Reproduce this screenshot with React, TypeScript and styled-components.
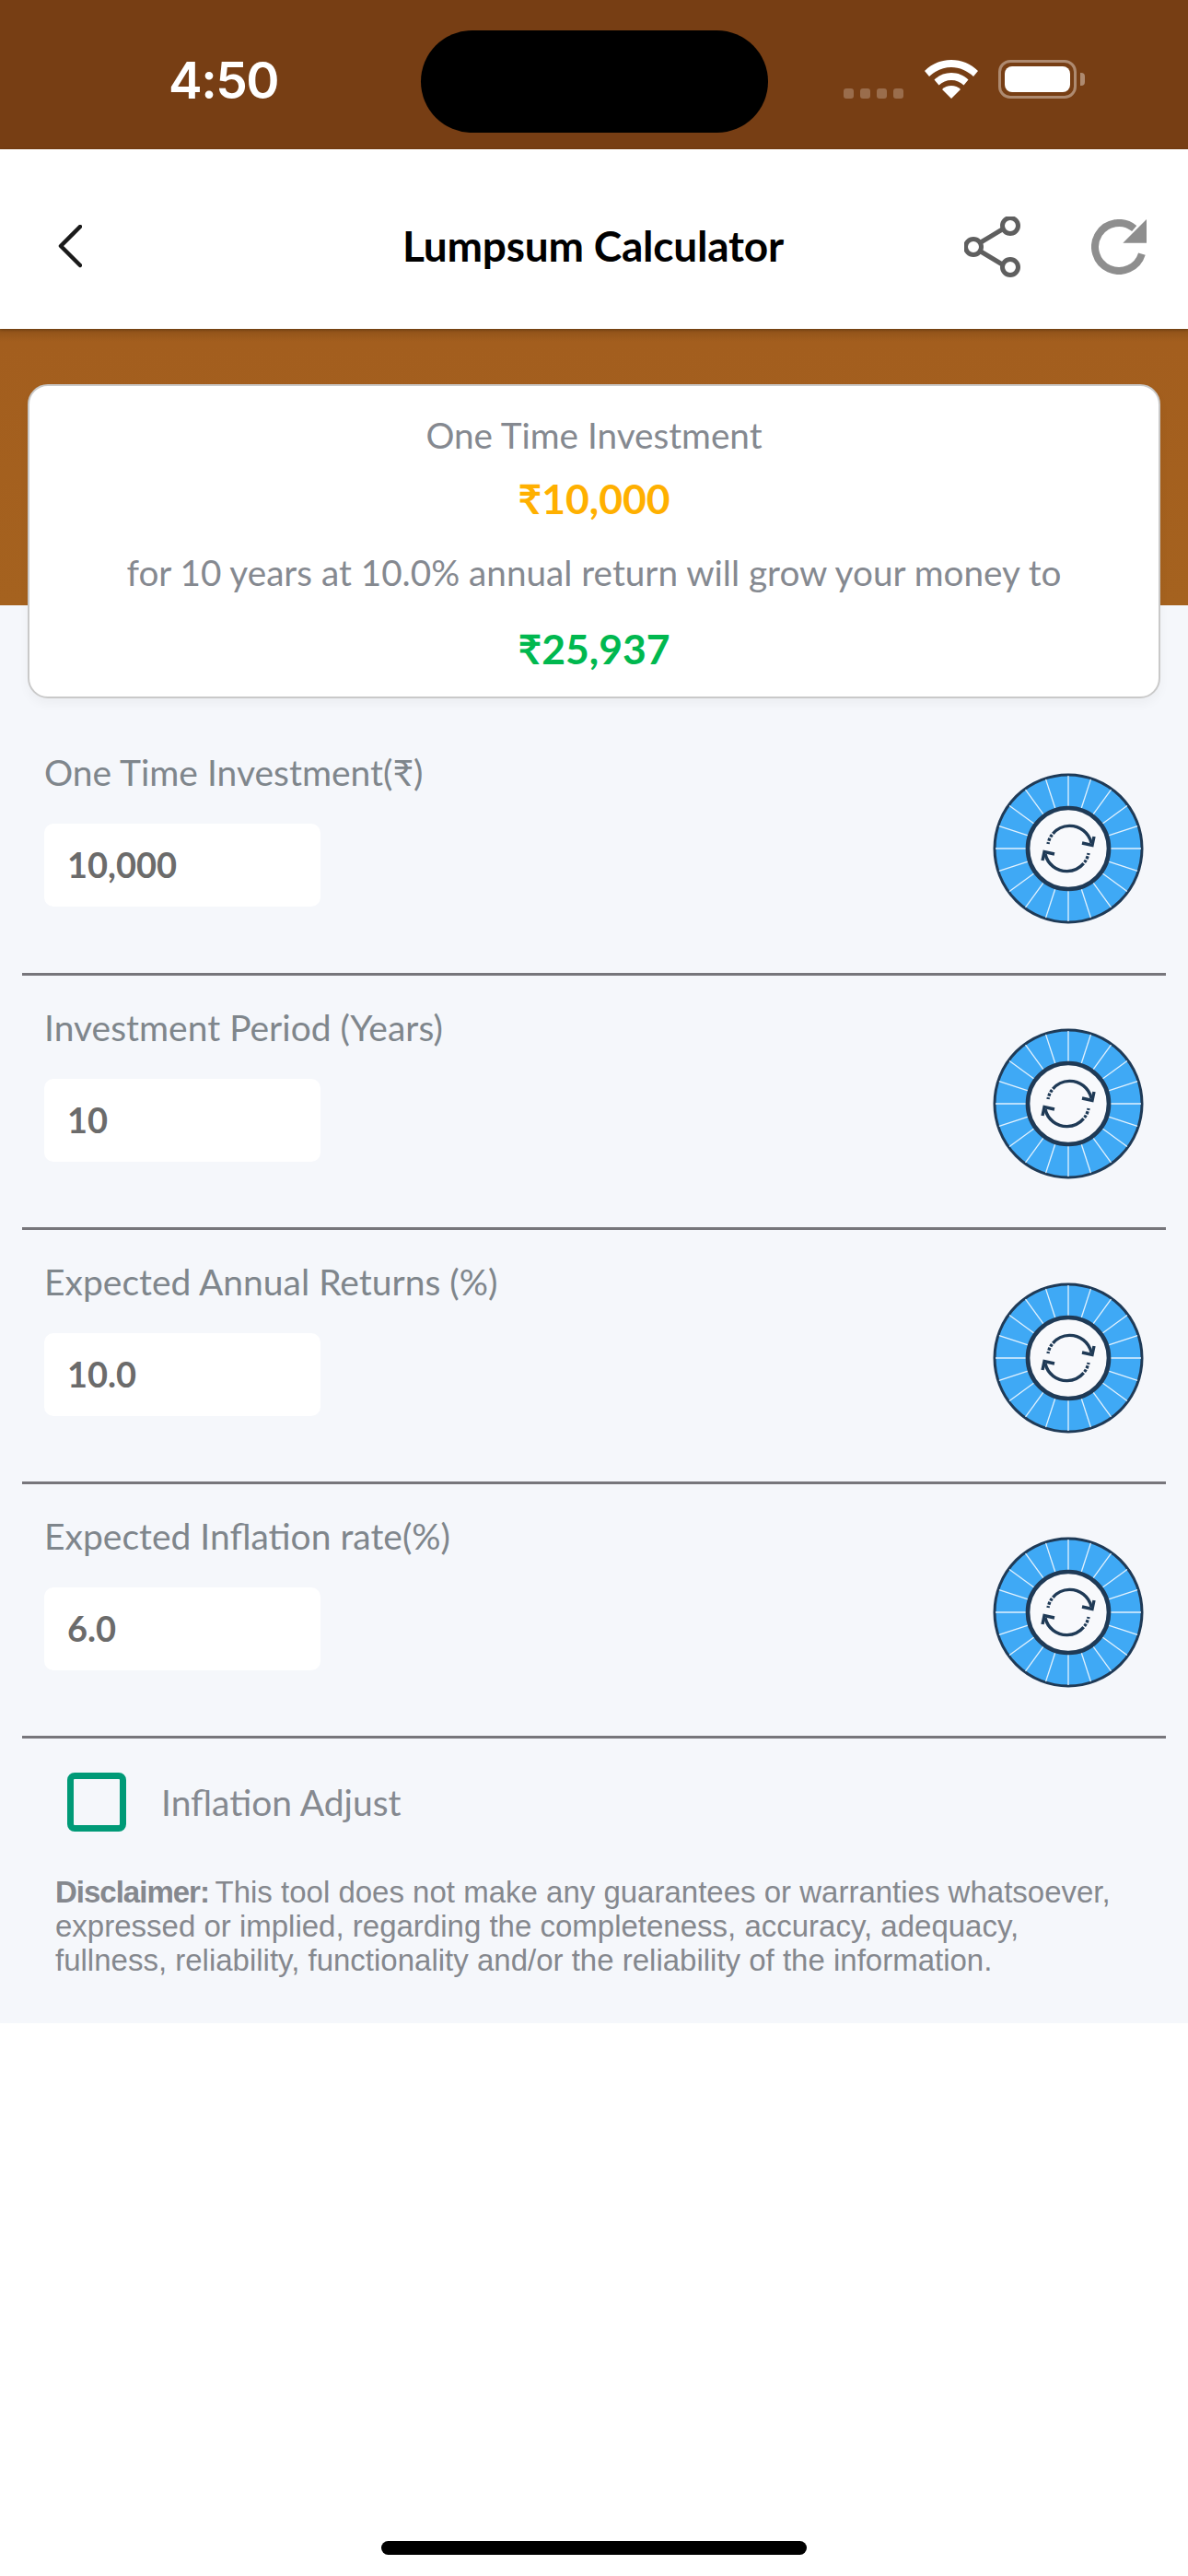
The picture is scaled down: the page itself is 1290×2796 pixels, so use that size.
import React from 'react';
import styled, { createGlobalStyle } from 'styled-components';

const GlobalStyle = createGlobalStyle`
  html, body { margin: 0; padding: 0; background: #fff; }
  body { font-family: Lato, "Noto Sans", sans-serif; }
`;

const fields = [
  { label: 'One Time Investment(₹)', value: '10,000' },
  { label: 'Investment Period (Years)', value: '10' },
  { label: 'Expected Annual Returns (%)', value: '10.0' },
  { label: 'Expected Inflation rate(%)', value: '6.0' },
];

const spokes = Array.from({ length: 20 }, (_, i) => i * 18);

const Wheel = () => (
  <WheelSvg viewBox="0 0 164 164">
    <circle cx="82" cy="82" r="80" fill="#3fa9f5" stroke="#1f3a56" strokeWidth="3" />
    {spokes.map((deg) => (
      <line key={deg} x1="82" y1="3" x2="82" y2="36" stroke="#e3f2fe" strokeWidth="1.3" transform={`rotate(${deg} 82 82)`} />
    ))}
    <circle cx="82" cy="82" r="44" fill="#f8f9fc" stroke="#1f3a56" strokeWidth="4.7" />
    {[0, 180].map((deg) => (
      <g key={deg} fill="none" stroke="#1f3a56" strokeWidth="3.4" transform={`rotate(${deg} 82 82)`}>
        <path d="M60 77 A24 24 0 0 1 107 76" strokeDasharray="2 1.5 3 1.5 3 1.5 60" />
        <path d="M97 76 L108 78.500 L110 69" />
      </g>
    ))}
  </WheelSvg>
);

export default function App() {
  return (
    <Page>
      <GlobalStyle />
      <StatusBar>
        <Clock>4:50</Clock>
        <Island />
        <StatusIcons>
          <Signal>
            <i /><i /><i /><i />
          </Signal>
          <svg width="58" height="42" viewBox="0 0 58 42">
            <path fill="#fff" d="M29 0C18 0 8 4 0 12l5 6c6.500-6 15-10 24-10s17.500 4 24 10l5-6C50 4 40 0 29 0z" />
            <path fill="#fff" d="M29 14c-7 0-13.500 2.700-18.500 7.500l5 6C19 24 24 22 29 22s10 2 13.500 5.500l5-6C42.500 16.700 36 14 29 14z" />
            <path fill="#fff" d="M29 28c-4 0-7.500 1.500-10 4l10 10 10-10c-2.500-2.500-6-4-10-4z" />
          </svg>
          <Battery>
            <BatteryFill />
            <BatteryCap />
          </Battery>
        </StatusIcons>
      </StatusBar>

      <NavBar>
        <BackButton>
          <svg width="26" height="48" viewBox="0 0 26 48">
            <path d="M24 2 L3 23 L24 44" fill="none" stroke="#1a1a1a" strokeWidth="4.500" strokeLinecap="round" strokeLinejoin="round" />
          </svg>
        </BackButton>
        <Title>Lumpsum Calculator</Title>
        <NavActions>
          <svg width="62" height="66" viewBox="0 0 62 66">
            <g fill="none" stroke="#5f5f5f" strokeWidth="5">
              <path d="M18 28 L43 13 M18 38 L43 53" />
              <circle cx="10" cy="33" r="8.500" />
              <circle cx="50" cy="10" r="8.500" />
              <circle cx="50" cy="55" r="8.500" />
            </g>
          </svg>
          <svg width="60" height="60" viewBox="0 0 60 60">
            <path d="M46.700 10 A26 26 0 1 0 54.900 37.600" fill="none" stroke="#8e8e8e" strokeWidth="8" />
            <path d="M34.300 25.700 L60 25.700 L60 0 z" fill="#8e8e8e" />
          </svg>
        </NavActions>
      </NavBar>

      <Hero />
      <Summary>
        <SummaryLabel $top={30}>One Time Investment</SummaryLabel>
        <Amount $color="#ffb000" $top={20}>₹10,000</Amount>
        <SummaryLabel $top={31}>for 10 years at 10.0% annual return will grow your money to</SummaryLabel>
        <Amount $color="#00b84f" $top={34}>₹25,937</Amount>
      </Summary>

      <Form>
        {fields.map((f) => (
          <FieldRow key={f.label}>
            <FieldLeft>
              <FieldLabel>{f.label}</FieldLabel>
              <ValueBox>{f.value}</ValueBox>
            </FieldLeft>
            <Wheel />
          </FieldRow>
        ))}
        <CheckRow>
          <CheckBox />
          <CheckLabel>Inflation Adjust</CheckLabel>
        </CheckRow>
        <Disclaimer>
          <b>Disclaimer:</b> This tool does not make any guarantees or warranties whatsoever,
          expressed or implied, regarding the completeness, accuracy, adequacy,
          fullness, reliability, functionality and/or the reliability of the information.
        </Disclaimer>
      </Form>

      <BottomArea>
        <HomeBar />
      </BottomArea>
    </Page>
  );
}

const Page = styled.div`
  width: 1290px;
  height: 2796px;
  display: flex;
  flex-direction: column;
  background: #fff;
  overflow: hidden;
`;

const StatusBar = styled.div`
  height: 162px;
  flex-shrink: 0;
  background: #773e14;
  display: flex;
  align-items: flex-start;
`;

const Clock = styled.div`
  margin: 60px 0 0 183px;
  width: 274px;
  font-family: Inter, "Liberation Sans", sans-serif;
  font-size: 55px;
  line-height: 55px;
  font-weight: 600;
  letter-spacing: -1.5px;
  color: #fff;
`;

const Island = styled.div`
  width: 377px;
  height: 111px;
  margin-top: 33px;
  border-radius: 56px;
  background: #000;
`;

const StatusIcons = styled.div`
  margin: 65px 0 0 82px;
  display: flex;
  align-items: flex-start;
  gap: 23px;
`;

const Signal = styled.div`
  display: flex;
  gap: 7px;
  margin-top: 31px;

  i {
    display: block;
    width: 11px;
    height: 11px;
    border-radius: 3px;
    background: #9a6d4c;
  }
`;

const Battery = styled.div`
  position: relative;
  width: 85px;
  height: 42px;
  box-sizing: border-box;
  border: 3px solid #ae8a70;
  border-radius: 13px;
  padding: 4px;
  margin-left: -1px;
`;

const BatteryFill = styled.div`
  width: 100%;
  height: 100%;
  background: #fff;
  border-radius: 8px;
`;

const BatteryCap = styled.div`
  position: absolute;
  right: -12px;
  top: 11px;
  width: 5px;
  height: 14px;
  background: #ae8a70;
  border-radius: 0 4px 4px 0;
`;

const NavBar = styled.div`
  box-sizing: border-box;
  height: 195px;
  padding-top: 16px;
  flex-shrink: 0;
  background: #fff;
  display: grid;
  grid-template-columns: 1fr auto 1fr;
  align-items: center;
  position: relative;
  z-index: 1;
  box-shadow: 0 1px 3px rgba(0, 0, 0, 0.3);
`;

const BackButton = styled.div`
  padding-left: 63px;
  line-height: 0;
`;

const Title = styled.div`
  margin: -3px 0 0 -2px;
  font-size: 46px;
  font-weight: 700;
  letter-spacing: -0.2px;
  color: #000;
`;

const NavActions = styled.div`
  display: flex;
  align-items: center;
  justify-content: flex-end;
  gap: 76px;
  padding-right: 45px;
`;

const Hero = styled.div`
  height: 300px;
  flex-shrink: 0;
  background: linear-gradient(#8f5219 0, #a35e1e 14px, #a5621f 100%);
`;

const Summary = styled.div`
  box-sizing: border-box;
  width: 1230px;
  height: 341px;
  margin: -240px 0 0 30px;
  flex-shrink: 0;
  position: relative;
  background: #fff;
  border: 2px solid #c9c9c9;
  border-radius: 22px;
  box-shadow: 0 6px 12px rgba(0, 0, 0, 0.04);
  display: flex;
  flex-direction: column;
  align-items: center;
`;

const SummaryLabel = styled.div<{ $top: number }>`
  margin-top: ${(p) => p.$top}px;
  font-size: 38.700px;
  line-height: 46px;
  color: #858990;
`;

const Amount = styled.div<{ $color: string; $top: number }>`
  margin-top: ${(p) => p.$top}px;
  font-size: 44.500px;
  line-height: 52px;
  font-weight: 700;
  color: ${(p) => p.$color};
`;

const Form = styled.div`
  margin-top: -101px;
  padding-top: 101px;
  height: 1539px;
  box-sizing: border-box;
  flex-shrink: 0;
  background: #f5f7fb;
`;

const FieldRow = styled.div`
  box-sizing: border-box;
  height: 276px;
  margin: 0 24px;
  padding: 33px 24px 0;
  border-bottom: 3px solid #77767b;
  display: flex;
  justify-content: space-between;
  align-items: flex-start;

  &:first-child {
    height: 301px;
    padding-top: 57px;
  }
`;

const FieldLeft = styled.div`
  display: flex;
  flex-direction: column;
`;

const FieldLabel = styled.div`
  font-size: 39px;
  line-height: 46px;
  color: #7f868c;
`;

const ValueBox = styled.div`
  box-sizing: border-box;
  width: 300px;
  height: 90px;
  margin-top: 33px;
  padding-left: 25px;
  border-radius: 10px;
  background: #fff;
  font-size: 38px;
  line-height: 88px;
  font-weight: 700;
  color: #6b6b6b;
`;

const WheelSvg = styled.svg`
  width: 164px;
  height: 164px;
  margin-top: 24px;
  flex-shrink: 0;
`;

const CheckRow = styled.div`
  display: flex;
  align-items: center;
  margin: 37px 0 0 73px;
`;

const CheckBox = styled.div`
  box-sizing: border-box;
  width: 64px;
  height: 64px;
  border: 7px solid #009a77;
  border-radius: 8px;
`;

const CheckLabel = styled.div`
  margin-left: 38px;
  font-size: 39px;
  color: #858990;
`;

const Disclaimer = styled.div`
  margin: 47px 0 0 60px;
  width: 1155px;
  font-family: "Liberation Sans", Arial, sans-serif;
  font-size: 33px;
  line-height: 37px;
  color: #85888e;

  b {
    font-weight: 700;
    letter-spacing: -1px;
    margin-right: -2px;
  }
`;

const BottomArea = styled.div`
  flex: 1;
  background: #fff;
  display: flex;
  align-items: flex-end;
  justify-content: center;
  padding-bottom: 23px;
`;

const HomeBar = styled.div`
  width: 462px;
  height: 15px;
  border-radius: 8px;
  background: #000;
`;
